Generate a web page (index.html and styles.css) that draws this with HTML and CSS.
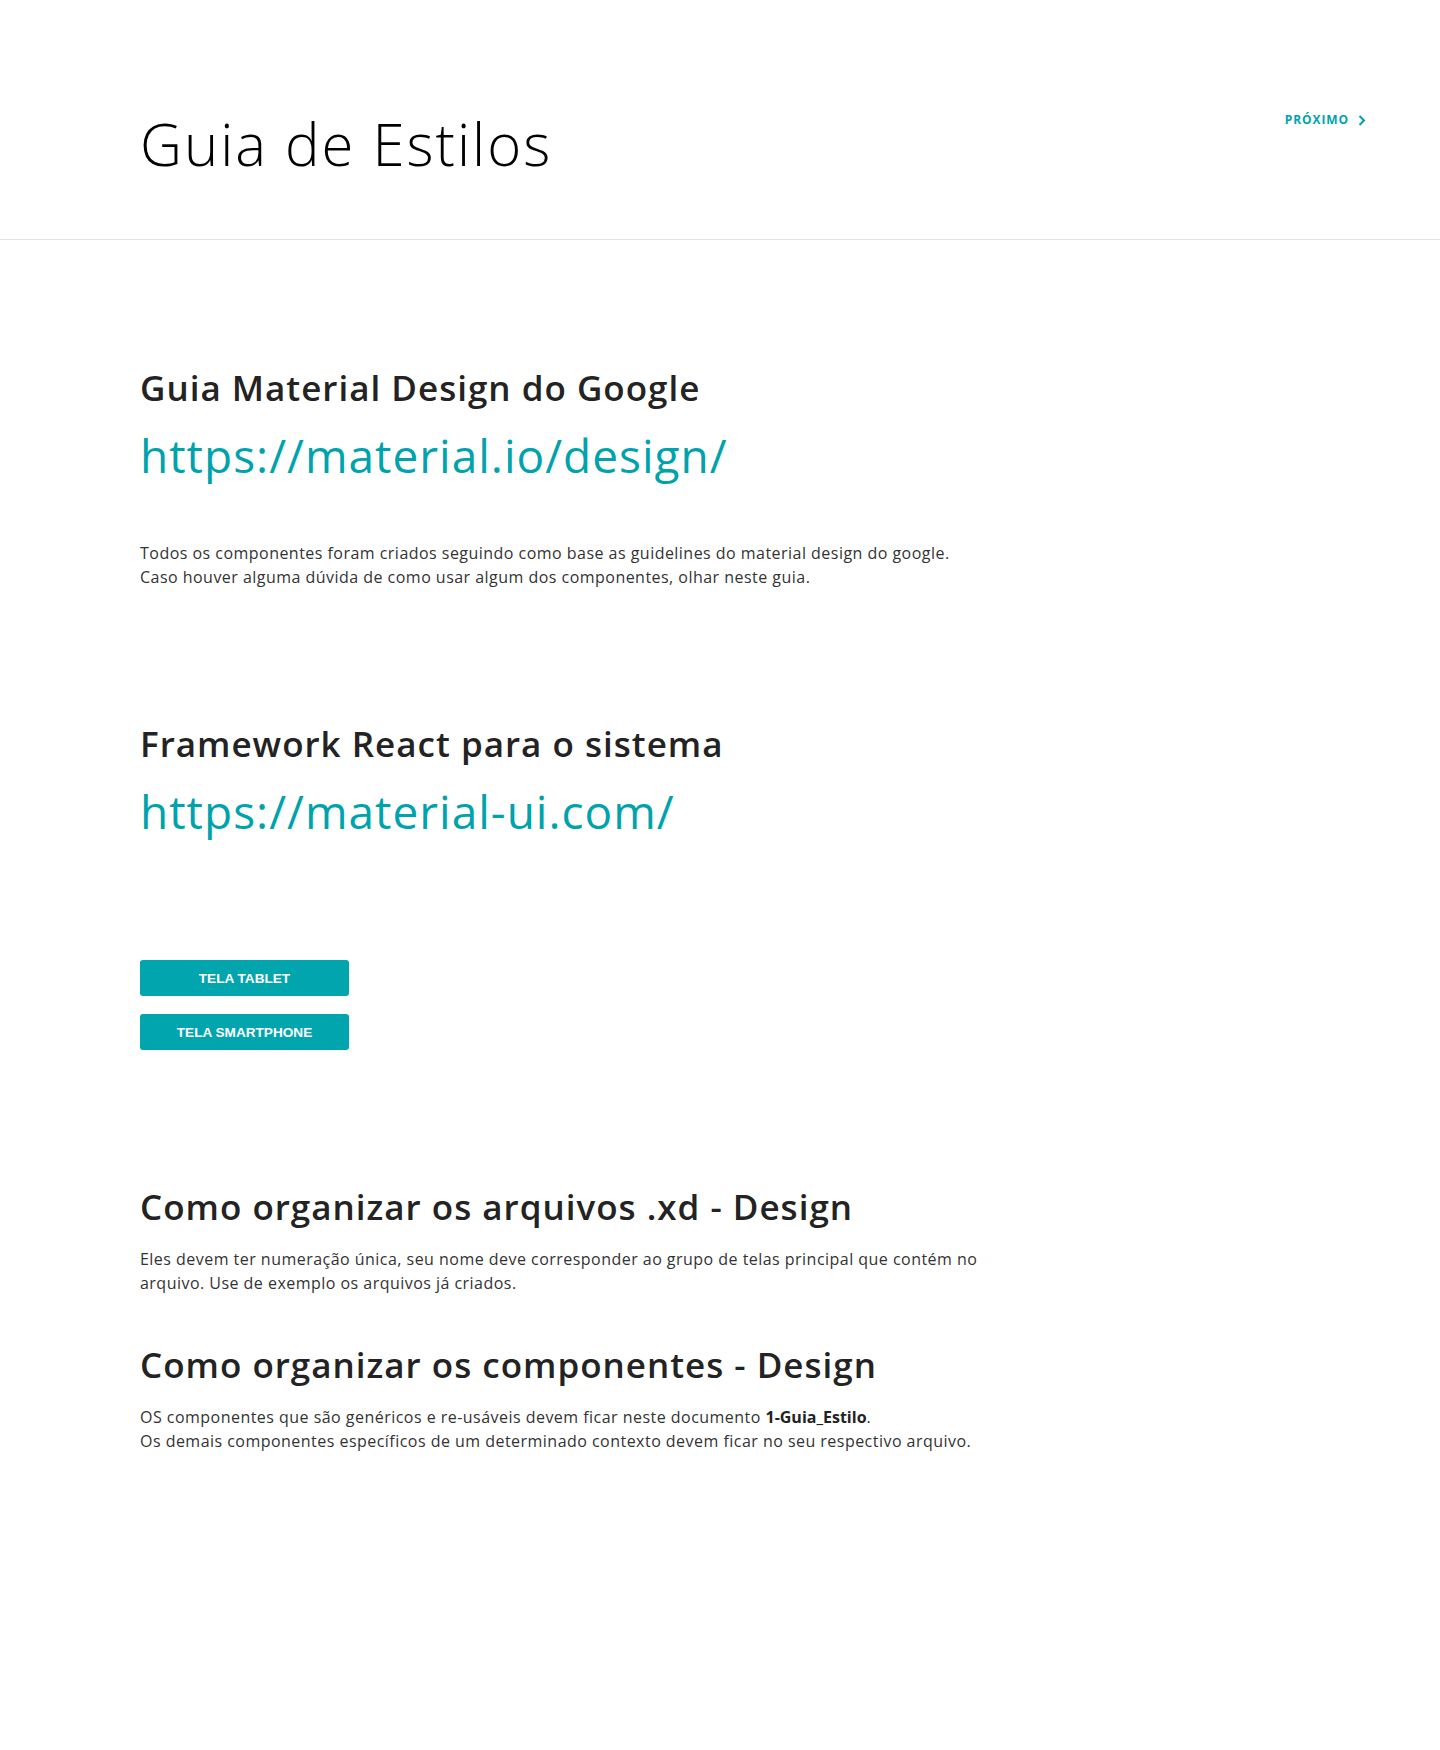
FILE: index.html
```html
<!DOCTYPE html>
<html lang="pt-BR">
<head>
<meta charset="utf-8">
<title>Guia de Estilos</title>
<link rel="stylesheet" href="styles.css">
</head>
<body>
<header class="topbar">
  <h1 class="page-title">Guia de Estilos</h1>
  <a class="next-link" href="#">
    <span class="next-label">PRÓXIMO</span>
    <svg class="next-icon" width="8" height="11" viewBox="0 0 8 11" aria-hidden="true">
      <path d="M1.5 1 L6 5.5 L1.5 10" fill="none" stroke="currentColor" stroke-width="2"/>
    </svg>
  </a>
</header>
<main class="content">
  <section class="block block-first">
    <h2 class="block-title">Guia Material Design do Google</h2>
    <a class="big-link" href="#">https://material.io/design/</a>
    <p class="text text-spaced">Todos os componentes foram criados seguindo como base as guidelines do material design do google.<br>Caso houver alguma dúvida de como usar algum dos componentes, olhar neste guia.</p>
  </section>
  <section class="block block-second">
    <h2 class="block-title">Framework React para o sistema</h2>
    <a class="big-link" href="#">https://material-ui.com/</a>
  </section>
  <div class="buttons">
    <button class="btn">TELA TABLET</button>
    <button class="btn">TELA SMARTPHONE</button>
  </div>
  <section class="block block-third">
    <h2 class="block-title">Como organizar os arquivos .xd - Design</h2>
    <p class="text text-close">Eles devem ter numeração única, seu nome deve corresponder ao grupo de telas principal que contém no arquivo. Use de exemplo os arquivos já criados.</p>
  </section>
  <section class="block block-fourth">
    <h2 class="block-title">Como organizar os componentes - Design</h2>
    <p class="text text-close">OS componentes que são genéricos e re-usáveis devem ficar neste documento <strong>1-Guia_Estilo</strong>.<br>Os demais componentes específicos de um determinado contexto devem ficar no seu respectivo arquivo.</p>
  </section>
</main>
</body>
</html>
```
FILE: styles.css
```css
* { box-sizing: border-box; }
html, body { margin: 0; padding: 0; background: #fff; }
body {
  font-family: "Open Sans", "Noto Sans", sans-serif;
  color: #333;
  width: 1440px;
  min-height: 1750px;
}
.topbar {
  display: flex;
  justify-content: space-between;
  align-items: flex-start;
  height: 240px;
  padding: 112px 74px 0 140px;
  border-bottom: 1px solid #e2e2e2;
}
.page-title {
  margin: 0;
  font-size: 58px;
  line-height: 64px;
  font-weight: 300;
  color: #000;
  letter-spacing: 2px;
}
.next-link {
  display: flex;
  align-items: center;
  gap: 9px;
  color: #00a3ac;
  text-decoration: none;
}
.next-label {
  font-size: 12px;
  line-height: 16px;
  font-weight: 700;
  letter-spacing: 0.9px;
}
.next-icon { display: block; }
.content {
  padding: 124px 0 0 140px;
}
.block { display: flex; flex-direction: column; align-items: flex-start; }
.block-second { margin-top: 131px; }
.block-third { margin-top: 133px; }
.block-fourth { margin-top: 46px; }
.block-title {
  margin: 0;
  font-size: 35px;
  line-height: 48px;
  font-weight: 600;
  color: #232323;
  letter-spacing: 1px;
}
.big-link {
  margin-top: 15px;
  font-size: 46px;
  line-height: 56px;
  font-weight: 400;
  color: #00a3ac;
  text-decoration: none;
  letter-spacing: 1px;
}
.text {
  margin: 0;
  max-width: 870px;
  font-size: 16px;
  line-height: 24px;
  color: #333;
  letter-spacing: 0.47px;
}
.text strong { font-weight: 700; color: #222; letter-spacing: 0; }
.text-spaced { margin-top: 58px; }
.text-close { margin-top: 16px; }
.buttons {
  display: flex;
  flex-direction: column;
  gap: 18px;
  margin-top: 121px;
}
.btn {
  width: 209px;
  height: 36px;
  border: 0;
  border-radius: 3px;
  background: #00a5ad;
  color: #fff;
  font-family: "Liberation Sans", Arial, sans-serif;
  font-weight: 700;
  font-size: 13.6px;
  padding: 0;
  cursor: pointer;
}
```
